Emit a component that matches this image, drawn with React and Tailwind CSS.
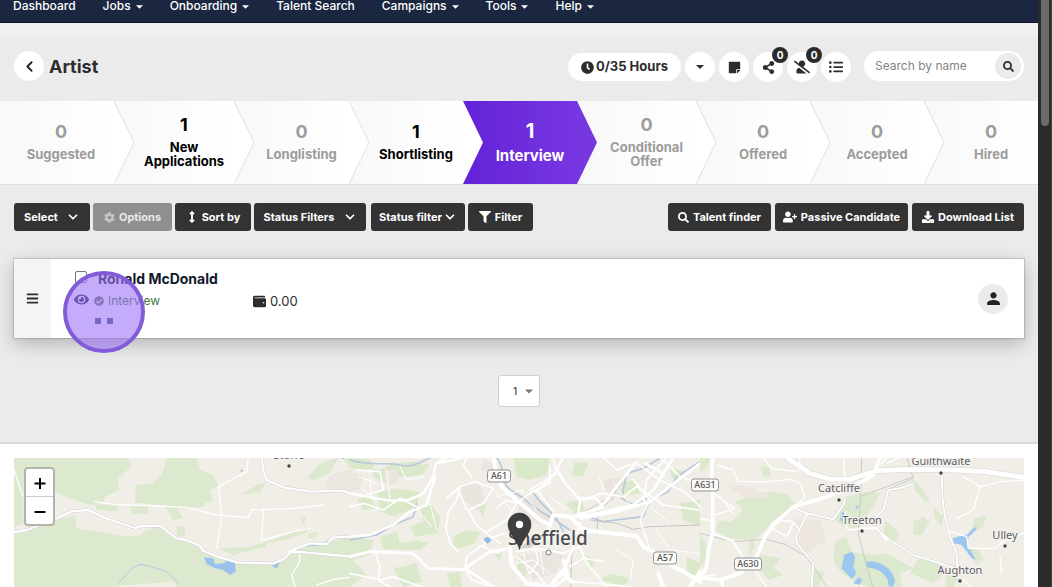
import React from "react";
import {
  FaClock, FaStickyNote, FaShareAlt, FaUserSlash, FaListUl, FaSearch, FaCog,
  FaArrowsAltV, FaFilter, FaUserPlus, FaDownload, FaBars, FaEye, FaCheckCircle, FaWallet,
} from "react-icons/fa";
import { IoMdPerson } from "react-icons/io";
import { ChevronDown, ChevronLeft } from "lucide-react";

function Caret({ className }) {
  return (
    <svg viewBox="0 0 8 4" className={className} aria-hidden="true">
      <path d="M0 0h8L4 4z" fill="currentColor" />
    </svg>
  );
}

const NAV = [
  ["Dashboard", false],
  ["Jobs", true],
  ["Onboarding", true],
  ["Talent Search", false],
  ["Campaigns", true],
  ["Tools", true],
  ["Help", true],
];

function NavBar() {
  return (
    <nav className="flex h-[23px] shrink-0 items-start gap-[27px] border-b border-[#0f1830] bg-[#1b2640] px-[13px] text-[12px] leading-[11px] font-medium text-white">
      {NAV.map(([label, menu]) => (
        <a key={label} href="#" className="flex items-center gap-[5px] whitespace-nowrap">
          {label}
          {menu && <Caret className="mt-[2px] h-[4px] w-[7px]" />}
        </a>
      ))}
    </nav>
  );
}

function RoundButton({ label, badge, children }) {
  return (
    <button aria-label={label} className="relative flex size-[30px] items-center justify-center rounded-full bg-white text-[#2d2d2d]">
      {children}
      {badge && (
        <span className="absolute -top-[5px] left-[19px] flex size-4 items-center justify-center rounded-full bg-[#2b2b2b] text-[10px] font-bold text-white">
          {badge}
        </span>
      )}
    </button>
  );
}

function Header() {
  return (
    <header className="flex h-16 shrink-0 items-center justify-between bg-[#ebebeb] px-[14px] pb-[6px]">
      <div className="flex items-center gap-[5px]">
        <button aria-label="Back" className="flex size-[30px] items-center justify-center rounded-full bg-white text-[#222]">
          <ChevronLeft size={17} strokeWidth={2.6} />
        </button>
        <h1 className="text-[18px] font-bold text-[#2d2d2d]">Artist</h1>
      </div>
      <div className="flex items-center gap-[13px]">
        <div className="flex items-center gap-1 pt-[2px]">
          <div className="flex h-7 w-[113px] items-center justify-center gap-[2px] rounded-full bg-white text-[13px] font-bold whitespace-nowrap text-[#2d2d2d]">
            <FaClock size={13} />
            0/35 Hours
          </div>
          <RoundButton label="More hours"><Caret className="h-[4px] w-[8px]" /></RoundButton>
          <RoundButton label="Notes"><FaStickyNote size={13} /></RoundButton>
          <RoundButton label="Share" badge="0"><FaShareAlt size={13} /></RoundButton>
          <RoundButton label="Hidden candidates" badge="0"><FaUserSlash size={16} /></RoundButton>
          <RoundButton label="List"><FaListUl size={14} /></RoundButton>
        </div>
        <form className="flex h-[30px] w-40 items-center justify-between rounded-full bg-white pr-[3px] pl-[11px]">
          <input
            aria-label="Search by name"
            placeholder="Search by name"
            className="w-[110px] min-w-0 bg-transparent text-[12px] outline-none placeholder:text-[#858585]"
          />
          <button type="button" aria-label="Search" className="flex size-[26px] shrink-0 items-center justify-center rounded-full bg-[#ebebeb] text-[#2d2d2d]">
            <FaSearch size={11} />
          </button>
        </form>
      </div>
    </header>
  );
}

const STAGES = [
  [0, "Suggested"],
  [1, "New Applications"],
  [0, "Longlisting"],
  [1, "Shortlisting"],
  [1, "Interview"],
  [0, "Conditional Offer"],
  [0, "Offered"],
  [0, "Accepted"],
  [0, "Hired"],
];
const ACTIVE = 4;

function Stages() {
  return (
    <ol className="grid h-[84px] shrink-0 grid-cols-[114fr_120fr_115fr_114fr_114fr_119fr_114fr_114fr_114fr] border-b border-[#dcdcdc]">
      {STAGES.map(([count, label], i) => {
        const active = i === ACTIVE;
        const afterActive = i === ACTIVE + 1;
        const tone = active
          ? "bg-linear-to-r from-[#6321d8] to-[#7636e0] text-white"
          : count
            ? "bg-linear-to-r from-[#f8f8f8] to-white text-black"
            : "bg-linear-to-r from-[#f8f8f8] to-white text-[#9c9c9c]";
        return (
          <li key={label} className={"relative " + tone}>
            {i > 0 && (
              <svg viewBox="0 0 20 83" preserveAspectRatio="none" className="absolute top-0 left-0 h-full w-5" aria-hidden="true">
                <path d="M0 0 20 41.500 0 83z" fill={afterActive ? "#7636e0" : "#ffffff"} />
                {!active && !afterActive && <path d="M0 0 20 41.500 0 83" fill="none" stroke="#e0e0e0" />}
              </svg>
            )}
            <a
              href="#"
              className={
                "flex h-full flex-col items-center justify-center pb-px text-center font-bold " +
                (i > 0 ? "pl-5 " : "pl-2 ") +
                (active ? "gap-[7px] text-[15px] leading-[15px]" : "gap-[6px] text-[13px] leading-[14px]")
              }
            >
              <span className={active ? "text-[20px] leading-[20px]" : "text-[18px] leading-[18px]"}>{count}</span>
              <span>{label}</span>
            </a>
          </li>
        );
      })}
    </ol>
  );
}

function Tool({ width, muted, children }) {
  return (
    <button
      className={
        "flex h-7 items-center justify-center gap-1 rounded-[3px] text-[11px] font-bold whitespace-nowrap " +
        (muted ? "bg-[#8f8f8f] text-[#e9e9e9] " : "bg-[#333] text-white ") +
        width
      }
    >
      {children}
    </button>
  );
}

function Toolbar() {
  return (
    <div className="flex items-center justify-between px-[14px] pt-[18px]">
      <div className="flex gap-[3px]">
        <Tool width="w-[76px]">Select<ChevronDown size={14} strokeWidth={3} className="ml-1" /></Tool>
        <Tool width="w-[79px]" muted><FaCog size={11} className="text-[#c4c4c4]" />Options</Tool>
        <Tool width="w-[76px]"><FaArrowsAltV size={12} />Sort by</Tool>
        <Tool width="w-[112px]">Status Filters<ChevronDown size={14} strokeWidth={3} className="ml-1" /></Tool>
        <Tool width="ml-[2px] w-[94px]"><span className="-mr-[3px]">Status filter</span><ChevronDown size={14} strokeWidth={3} /></Tool>
        <Tool width="w-[65px]"><FaFilter size={12} />Filter</Tool>
      </div>
      <div className="flex gap-[4px]">
        <Tool width="w-[103px]"><FaSearch size={11} />Talent finder</Tool>
        <Tool width="w-[133px]"><FaUserPlus size={14} />Passive Candidate</Tool>
        <Tool width="w-[112px]"><FaDownload size={12} />Download List</Tool>
      </div>
    </div>
  );
}

function Candidate() {
  return (
    <article className="relative mx-[14px] mt-7 flex h-[79px] bg-white shadow-[0_0_1px_1px_rgba(0,0,0,0.13),0_6px_18px_rgba(0,0,0,0.24)]">
      <button aria-label="Reorder" className="flex w-[37px] items-center justify-center bg-[#f4f4f4] text-[#2d2d2d]">
        <FaBars size={13} />
      </button>
      <div className="flex flex-1 items-start gap-[9px] pt-3 pl-[22px]">
        <div className="flex w-4 flex-col items-center gap-[9px]">
          <input type="checkbox" aria-label="Select Ronald McDonald" className="size-3 appearance-none rounded-[2px] border border-[#777] bg-white" />
          <FaEye size={15} className="text-[#1b2640]" />
        </div>
        <div className="flex w-[146px] flex-col">
          <a href="#" className="text-[14px] leading-4 font-bold whitespace-nowrap text-[#111a2c]">Ronald McDonald</a>
          <div className="-ml-1 mt-[6px] flex items-center gap-1 text-[12px] leading-4 text-[#44783f]">
            <FaCheckCircle size={10} className="text-[#5c7a5e]" />
            <span>Interview</span>
          </div>
          <div className="mt-[9px] -ml-[3px] flex gap-[6px]">
            <i className="size-[6px] bg-[#3f5470]" />
            <i className="size-[6px] bg-[#3f5470]" />
          </div>
        </div>
        <div className="mt-[22px] flex items-center gap-1 text-[13px] leading-4 text-[#2d2d2d]">
          <FaWallet size={13} />
          0.00
        </div>
      </div>
      <button aria-label="Profile" className="mr-4 flex size-[30px] items-center justify-center self-center rounded-full bg-[#ebebeb] text-[#222]">
        <IoMdPerson size={17} />
      </button>
      <span className="pointer-events-none absolute top-3 left-[49px] size-[82px] rounded-full border-[4px] border-[#835bd9] bg-[#9e74f8]/60" />
    </article>
  );
}

function Pager() {
  return (
    <div className="flex justify-center pt-[37px] pb-[35px]">
      <label className="relative flex">
        <select aria-label="Page" className="h-8 w-[42px] appearance-none rounded-[3px] border border-[#cfcfcf] bg-white pr-2 text-center text-[10px] font-medium text-[#444]">
          <option>1</option>
        </select>
        <Caret className="pointer-events-none absolute top-[14px] right-[7px] h-[5px] w-2 text-[#777]" />
      </label>
    </div>
  );
}

const SHIELDS = [
  ["A61", 499, 476, 23],
  ["A631", 705, 485, 27],
  ["A57", 665, 558, 23],
  ["A630", 748, 564, 27],
];
const PLACES = [
  ["Storrs", 289, 459, 289, 466],
  ["Guilthwaite", 941, 465, 941, 473],
  ["Catcliffe", 839, 492, 839, 500],
  ["Treeton", 862, 524, 862, 531],
  ["Ulley", 1005, 539, 1005, 546],
  ["Aughton", 960, 574, 960, 581],
];

/* Terrain is drawn in three tiles, each at three units to the pixel. */
function MapArt() {
  return (
    <svg viewBox="14 458 1010 129" preserveAspectRatio="xMidYMin slice" className="absolute inset-0 size-full" role="img" aria-label="Map of Sheffield">
      <rect x="14" y="458" width="1010" height="129" fill="#f1eee8" />
      <g transform="translate(0 440) scale(.33333)" strokeLinecap="round" strokeLinejoin="round">
        <g fill="#dde9cf">
          <path d="M42 52H385L393 80 352 118 358 150 318 168 310 188 270 195 215 178 165 155 160 90 72 84 70 250 42 262z" />
          <path d="M500 52H590L600 90 640 105 655 140 630 150 612 200 520 208 430 188 405 190 408 135 460 130 488 100z" />
          <path d="M42 275 165 240 225 225 230 265 300 275 380 288 420 275 480 262 520 295 600 318 640 350 700 368 830 372 880 330 1050 290 1120 300 1110 345 1060 360 1100 405 1050 441H520L515 425 350 441H42z" />
          <path d="M600 145 625 150 642 180 625 190 605 175zM390 198H445V222H395zM285 192 350 196 355 214 290 210zM490 195 530 205 550 235 520 240zM530 258H555V288H532zM655 325 750 320 860 285 920 262 925 275 800 320 700 345zM725 165 770 135 800 125 780 155zM900 230H918L912 258zM925 278H955L945 295H925zM920 115 960 70 1015 52 990 100 940 120z" />
        </g>
        <path d="M985 110 1010 95 1050 90 1090 110 1080 150 1030 160 975 140z" fill="#ebe6df" />
        <path d="M228 222 290 225 350 255 400 268 440 268 420 285 380 290 300 276 230 264zM355 437 520 425 530 441H355zM800 312 850 300 870 330 830 350 795 340z" fill="#f1eee8" />
        <path d="M612 352 640 355 645 372 670 370 688 358 705 370 708 395 690 405 670 390 645 385 620 372zM815 378 840 366 830 385zM1015 52H1050V62z" fill="#9ac2ec" />
        <path d="M357 428 395 385 420 373 455 380 500 395 535 430M900 320 960 315 1005 292 1050 288" fill="none" stroke="#a9c7e2" strokeWidth="3" />
        <path d="M42 90 68 165M285 185 340 193 480 198 560 202 650 225 745 233 755 210 880 205 970 195M740 95 655 140 662 190 665 235 650 325M745 52 740 95M790 210 785 300M790 300 880 275 930 265M1050 412 1000 418 950 435M898 335 900 365 875 405 885 441" fill="none" stroke="#fff" strokeWidth="4" />
        <path d="M42 277 80 270 160 240 215 214 265 210 320 236 405 264 430 258 480 257 530 295 560 300 600 318 610 333 660 352 715 368 820 370 850 358 880 328 930 310 980 312 1000 292 1050 290M865 332 920 338 1000 345 1050 350M785 52 790 90 800 120 850 142 930 155 1030 152 1050 160" fill="none" stroke="#c9c6cf" strokeWidth="9" />
        <path d="M42 277 80 270 160 240 215 214 265 210 320 236 405 264 430 258 480 257 530 295 560 300 600 318 610 333 660 352 715 368 820 370 850 358 880 328 930 310 980 312 1000 292 1050 290M865 332 920 338 1000 345 1050 350M785 52 790 90 800 120 850 142 930 155 1030 152 1050 160" fill="none" stroke="#fff" strokeWidth="7" />
        <circle cx="725" cy="92" r="3" fill="#aaa" />
      </g>
      <g transform="translate(350 440) scale(.33333)" strokeLinecap="round" strokeLinejoin="round">
        <g fill="#dbe9cb">
          <path d="M-20 52 60 60 75 80 50 90 0 85zM65 85 90 90 130 70 200 65 240 75 215 105 150 110 100 130 70 110zM80 160 140 145 210 155 200 200 130 230 90 215zM210 200 245 195 270 230 265 280 195 290 180 260 220 245zM90 290 140 275 150 310 200 300 235 310 210 330 100 328zM490 52H600L590 105 540 120 500 110zM675 65 715 70 700 110 665 105zM645 190 690 180 710 215 680 225zM310 290 350 270 390 275 375 310 310 330zM380 200 410 180 400 230zM130 385 200 370 215 425 160 441zM290 400 330 395 335 441H300zM790 130 850 120 870 160 800 170zM990 190 1050 180V260L1000 240zM700 340 735 360 725 385zM780 400 840 415 820 441 750 420zM1010 350 1050 370V410L1010 400zM430 340 455 335 450 365zM20 180 60 165 80 205 40 210zM960 85 1010 95 995 125 965 115zM505 345 535 360 525 415 500 395z" />
        </g>
        <g fill="#ebe5df">
          <path d="M330 135 390 130 410 190 380 210 340 180zM490 160 560 170 620 220 590 255 520 240zM510 350 590 330 640 345 620 400 540 420zM760 120 820 110 810 165 770 190zM100 90 140 85 145 130 110 140zM400 60 445 75 430 95 390 90z" />
        </g>
        <path d="M440 52C475 100 445 130 490 155S550 205 590 225 640 260 660 270M1050 65 980 110 955 155 900 180 880 230 760 245 700 225M935 52 880 85 830 100 815 175 850 195 890 175M0 60C60 80 110 65 150 75S210 65 245 52M200 190 190 230 130 255 80 285 0 300M550 160 575 190 620 235 640 275" fill="none" stroke="#b7c8da" strokeWidth="5" />
        <path d="M720 240 800 250 850 268 900 260 1050 255M668 280 662 441M790 175 745 210 740 280M860 60 790 165 680 230" fill="none" stroke="#cac5c4" strokeWidth="3" />
        <g fill="none" stroke="#fff">
          <path strokeWidth="5" d="M290 175 330 140 375 125 430 145 400 190 355 210 375 250 410 280 450 310M330 140 320 180 295 215 288 265 300 310 325 335M350 210 325 150M365 115 340 75 350 52M410 275 470 240 500 190 470 180 440 205M500 190 540 160 600 130 600 80M0 200 40 190 100 210 150 175 200 200M20 90 90 95 100 150 50 165M75 335 90 380 85 420 120 441M0 400 90 420 130 410 215 441M610 60 620 100 540 150M560 150 610 215M700 180 755 160 820 170 860 140 940 195 1050 210M850 120 900 180 870 240 900 330M860 70 930 120 1010 160 1050 200M930 52 990 110 1050 130M500 335 560 325 640 340 690 320M500 350 560 400 590 441M555 325 565 365 540 400M690 320 710 370 770 441M660 380 700 355 760 365M665 425 760 432 850 441M950 52 890 120 880 190M760 52 800 90 850 70M400 320 440 340 470 325M490 300 465 280 400 300M345 385 350 350 420 300M345 385 365 420 430 441M600 255 590 290 620 320" />
          <path strokeWidth="7" d="M0 160 50 170 120 182 175 180 220 160 250 110 258 70 310 60 340 52M0 290 60 285 130 255 180 215 230 195M290 52 260 70M640 52 620 90 650 135 690 180 685 220M690 175 740 175 760 205M620 95 560 155" />
          <path strokeWidth="8" d="M0 350 60 335 190 340 235 385 340 388 420 335 480 325M860 65 800 140 750 205 680 225M885 70 940 100M970 52 910 150 850 195 720 225 670 230M1050 70 900 185 800 215 690 235M690 250 670 320 650 370 630 410M640 360 655 410 610 441M345 385 430 441M230 195 255 110" />
          <path strokeWidth="12" d="M430 52 440 100 455 140 500 180 570 240 600 255 610 225 660 230 700 270 860 288 880 320 910 335M480 325 485 375 530 430 600 441 635 395 665 425M960 375 1010 400 1050 425M925 400 940 441M1020 441 1050 395M690 260 720 275" />
          <path strokeWidth="3" d="M25 110 80 130M35 145 75 180M60 120 65 180M110 90 120 180M150 80 170 120 220 110M210 220 245 260M240 190 260 270M425 145 480 205M440 170 520 150M510 150 560 210M500 370 550 360 600 400M520 340 545 430M570 330 580 400M745 110 780 185M790 130 850 205M900 200 960 250M800 330 850 360 840 420M920 270 960 330 1050 340M600 170 650 210" />
        </g>
        <path d="M400 298 412 290 425 300 412 312z" fill="#8bbce8" />
      </g>
      <g transform="translate(700 440) scale(.33333)" strokeLinecap="round" strokeLinejoin="round">
        <g fill="#dde9cf">
          <path d="M60 240 95 245 130 210 105 185 160 165 220 155 265 165 285 190 270 210 235 230 190 275 160 300 90 295 45 270zM440 170 500 155 540 160 520 200 470 265 430 260 405 240zM555 240 600 280 585 305 550 295zM635 120 655 130 690 180 675 185 645 150zM640 245 670 230 690 245 665 285 640 285zM700 200 730 230 725 260 705 235zM825 235 860 225 850 260 810 280zM405 305 440 290 455 335 520 345 560 340 640 385 600 400 605 441H500L460 420 425 400 400 365zM655 355 720 370 735 400 700 430 630 400zM170 340 240 355 220 385 250 405 205 420 175 385zM340 385 375 400 355 441H330zM0 280 25 320 20 360 0 380zM150 270 165 320 145 350zM180 80H210V110H190zM800 320 835 330 850 360 830 375zM740 400 775 415 760 441H735zM0 52H30L20 85 0 95z" />
        </g>
        <path d="M85 130 150 140 210 170 140 175 95 150zM280 235 360 240 380 300 320 340 290 300z" fill="#ede7e0" />
        <path d="M432 345 455 335 466 352 460 380 470 400 455 417 425 385zM475 412 487 418 480 435 460 430zM498 365C540 360 580 385 585 425L578 441 565 438C568 410 540 385 500 382zM758 295 780 288 800 285 825 260 830 268 805 292 803 315 828 360 815 355 785 315 760 310zM465 200 475 195 472 210zM425 215 435 220 430 250 420 240z" fill="#9cc7ee" />
        <path d="M485 52 482 170 475 280 495 360 518 441M100 305 200 298 260 315 320 350 350 395 380 441M0 280 100 305M620 52 640 115 560 150M640 110 480 170" fill="none" stroke="#cbcaca" strokeWidth="3" />
        <path d="M260 52 330 100 390 118 450 118 530 92 640 88 760 90 860 95 972 112" fill="none" stroke="#d6d3d3" strokeWidth="18" strokeLinecap="butt" />
        <g fill="none" stroke="#c9c8ca">
          <path strokeWidth="8" d="M725 90 728 180 735 230 750 290 770 340 772 390M435 180 430 195 400 238 320 220 285 205M530 228 550 210 565 150 600 145 640 130M520 260 570 300 640 345 770 385M320 225 288 290 290 310 340 370 335 441" />
        </g>
        <g fill="none" stroke="#fff">
          <path strokeWidth="4" d="M50 75 100 90 115 125 200 125 275 118 300 130 315 170 285 200M190 52 215 85 290 95M0 235 45 245M210 255 230 240 280 245 300 270M215 265 260 290 280 250M40 160 105 205 45 225M60 170 100 220M430 52 435 115M540 75 560 52M790 110 840 140 900 125 970 120M840 140 820 210 770 235M750 275 800 290 805 325 885 325 915 300 970 280M900 350 905 400M790 420 815 441M300 52 298 90M165 390 200 441M0 410 45 405M600 52 560 70M445 270 430 240 438 215M445 270 500 265" />
          <path strokeWidth="6" d="M725 90 728 180 735 230 750 290 770 340 772 390M435 180 430 195 400 238 320 220 285 205M530 228 550 210 565 150 600 145 640 130M520 260 570 300 640 345 770 385M320 225 288 290 290 310 340 370 335 441M480 265 530 265 560 300" />
          <path strokeWidth="11" d="M38 52 35 100 38 180 38 280 25 330 20 380 5 410M0 412 60 420 120 400 170 350 195 290 220 255 280 200 350 180 440 150 520 105 540 52M65 420 68 441" />
          <path strokeWidth="6" d="M40 280 100 305 130 355" />
          <path strokeWidth="15" strokeLinecap="butt" d="M260 52 330 100 390 118 450 118 530 92 640 88 760 90 860 95 972 112" />
        </g>
      </g>
      <g fontFamily="'Noto Sans', 'Open Sans', sans-serif" textAnchor="middle" fill="#5d5d64">
        {PLACES.map(([name, x, y, dx, dy]) => (
          <g key={name}>
            <text x={x} y={y} fontSize="11" stroke="#f6f4f0" strokeWidth="2" paintOrder="stroke">{name}</text>
            <circle cx={dx} cy={dy} r="1.700" fill="#444" />
          </g>
        ))}
        <text x="548" y="545" fontSize="19" fontWeight="500" fill="#4b4b50" stroke="#f6f4f0" strokeWidth="2" paintOrder="stroke">Sheffield</text>
        <circle cx="548.500" cy="552.500" r="2.500" fill="#fff" stroke="#777" />
        {SHIELDS.map(([name, x, y, w]) => (
          <g key={name}>
            <rect x={x - w / 2} y={y - 6} width={w} height="12" rx="2.500" fill="#fbfbf9" stroke="#929292" />
            <text x={x} y={y + 3} fontSize="9" fontWeight="500" fill="#555">{name}</text>
          </g>
        ))}
      </g>
      <path d="m520 548 16-14 8 2-14 12z" fill="#000" opacity=".12" />
      <path d="M519.500 549.500C518 541 508 533 508 524.500a11.500 11.500 0 0 1 23 0c0 8.500-10 16.500-11.500 25z" fill="#3f3f3f" stroke="#2d2d2d" strokeWidth=".6" />
      <circle cx="519.500" cy="524.500" r="3.700" fill="#fff" />
    </svg>
  );
}

function MapPanel() {
  return (
    <section className="flex min-h-[100px] flex-1 border-t-2 border-[#dadada] bg-white px-[14px] pt-[14px]">
      <div className="relative flex-1 overflow-hidden">
        <MapArt />
        <div className="absolute top-[9px] left-[10px] flex w-[31px] flex-col rounded-[4px] border-2 border-[#b3b5aa] bg-white text-black">
          <button aria-label="Zoom in" className="flex h-7 items-center justify-center border-b border-[#ccc]">
            <svg viewBox="0 0 12 12" className="size-3" stroke="currentColor" strokeWidth="2"><path d="M.500 6.500h11M6 1v11" /></svg>
          </button>
          <button aria-label="Zoom out" className="flex h-[27px] items-center justify-center">
            <svg viewBox="0 0 12 12" className="size-3" stroke="currentColor" strokeWidth="2"><path d="M.500 7h11" /></svg>
          </button>
        </div>
      </div>
    </section>
  );
}

export default function App() {
  return (
    <div className="flex h-screen overflow-hidden bg-[#ebebeb] font-['Inter','Lato',sans-serif]">
      <main className="flex min-w-0 flex-1 flex-col">
        <NavBar />
        <div className="h-[14px] shrink-0 bg-[#f0f0f0]" />
        <Header />
        <Stages />
        <Toolbar />
        <Candidate />
        <Pager />
        <MapPanel />
      </main>
      <div className="flex w-[14px] shrink-0 justify-center border-r border-[#444] bg-[#2b2b2b]" aria-hidden="true">
        <div className="h-[126px] w-2 rounded-b-full bg-[#6b6b6b]" />
      </div>
    </div>
  );
}
